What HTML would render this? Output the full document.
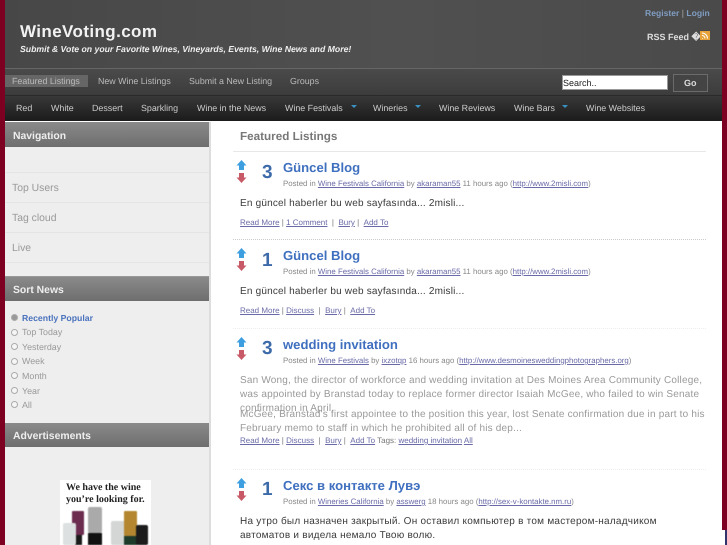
<!DOCTYPE html>
<html><head><meta charset="utf-8"><style>
html,body{margin:0;padding:0;background:#fff}
#p{position:relative;width:727px;height:545px;overflow:hidden;font-family:"Liberation Sans","Noto Sans CJK SC",sans-serif;background:#fff;filter:blur(.35px);text-rendering:geometricPrecision}
.t{position:absolute;white-space:nowrap;line-height:12px}
.b{position:absolute}
.tab{font-size:8.85px;color:#bbb;top:75px}
.m{font-size:8.9px;color:#ccc;top:102px}
.c{position:absolute;top:105px;width:0;height:0;border-left:3px solid transparent;border-right:3px solid transparent;border-top:3px solid #3a92c4}
.h{position:absolute;left:5px;width:204px;height:25px;background:linear-gradient(#8a8a8a,#6e6e6e);color:#eee;font-weight:bold}
.h span{position:absolute;left:8px;top:8.5px;font-size:10.4px;line-height:12px;white-space:nowrap}
.n{font-size:10.4px;color:#999;left:12px}
.l{position:absolute;left:5px;width:204px;height:1px;background:#e4e4e4}
.r{position:absolute;left:11px;width:5px;height:5px;border:1px solid #aaa;border-radius:50%;background:#f6f6f6}
.s{font-size:8.9px;color:#999;left:22px}
.ttl{font-size:13.1px;font-weight:bold;color:#3f6fbf;left:283px}
.num{font-size:19px;font-weight:bold;color:#3d6aa8;left:262px;line-height:22px}
.meta{font-size:7.85px;color:#888;left:283px}
a{color:#6a6aa8;text-decoration:underline}
.body{font-size:10px;letter-spacing:.19px;color:#3a3a3a;left:240px}
.g{color:#999}
.act{font-size:8px;left:240px;color:#777}
.dot{position:absolute;left:233px;width:473px;border-top:1px dotted #ccc}
svg{position:absolute}
</style></head><body><div id="p">
<div class="b" style="left:0;top:0;width:727px;height:68px;background:linear-gradient(90deg,#474747,#505050 55%,#4a4a4a)"></div>
<div class="b" style="left:0;top:68px;width:727px;height:1px;background:#666"></div>
<div class="b" style="left:0;top:69px;width:727px;height:26px;background:linear-gradient(#4a4a4a,#3c3c3c)"></div>
<div class="b" style="left:0;top:95px;width:727px;height:26px;background:linear-gradient(#383838,#1b1b1b);border-top:1px solid #2a2a2a;box-sizing:border-box"></div>
<div class="b" style="left:5px;top:75px;width:83px;height:12px;background:#666"></div>

<div class="t" style="left:20px;top:22px;font-size:17px;line-height:20px;font-weight:bold;color:#f2f2f2;letter-spacing:.4px">WineVoting.com</div>
<div class="t" style="left:20px;top:43px;font-size:8.7px;font-weight:bold;font-style:italic;color:#eee">Submit &amp; Vote on your Favorite Wines, Vineyards, Events, Wine News and More!</div>
<div class="t" style="left:645px;top:7px;font-size:8.6px;font-weight:bold;color:#7f9cc0">Register <span style="color:#aaa;font-weight:normal">|</span> Login</div>
<div class="t" style="left:647px;top:31px;font-size:9px;font-weight:bold;color:#ddd">RSS Feed �</div>
<div class="b" style="left:700px;top:31px;width:10px;height:9px;background:#e8a23a"></div>
<svg style="left:700px;top:31px" width="10" height="9" viewBox="0 0 10 9"><path d="M2 7.5h.6M2 4.5a3 3 0 0 1 3 3M2 2a5.5 5.5 0 0 1 5.5 5.5" fill="none" stroke="#fff" stroke-width="1"/></svg>

<div class="t tab" style="left:12px">Featured Listings</div>
<div class="t tab" style="left:98px">New Wine Listings</div>
<div class="t tab" style="left:189px">Submit a New Listing</div>
<div class="t tab" style="left:290px">Groups</div>

<div class="b" style="left:562px;top:75px;width:106px;height:15px;background:#fff;border:1px solid #999;box-sizing:border-box"></div>
<div class="t" style="left:563px;top:77px;font-size:9px;color:#222">Search..</div>
<div class="b" style="left:673px;top:74px;width:35px;height:18px;background:#444;border:1px solid #6b6b6b;box-sizing:border-box"></div>
<div class="t" style="left:684px;top:77px;font-size:9px;font-weight:bold;color:#ddd">Go</div>

<div class="t m" style="left:16px">Red</div>
<div class="t m" style="left:51px">White</div>
<div class="t m" style="left:92px">Dessert</div>
<div class="t m" style="left:141px">Sparkling</div>
<div class="t m" style="left:197px">Wine in the News</div>
<div class="t m" style="left:285px">Wine Festivals</div><div class="c" style="left:351px"></div>
<div class="t m" style="left:373px">Wineries</div><div class="c" style="left:415px"></div>
<div class="t m" style="left:439px">Wine Reviews</div>
<div class="t m" style="left:514px">Wine Bars</div><div class="c" style="left:562px"></div>
<div class="t m" style="left:586px">Wine Websites</div>

<div class="b" style="left:0;top:0;width:5px;height:545px;background:#7d0022"></div>
<div class="b" style="left:722px;top:0;width:5px;height:530px;background:#7d0022"></div>
<div class="b" style="left:725px;top:530px;width:2px;height:15px;background:#33336b"></div>

<div class="b" style="left:5px;top:122px;width:204px;height:423px;background:#eee;border-right:2px solid #ddd"></div>
<div class="h" style="top:122px"><span>Navigation</span></div>
<div class="l" style="top:172px"></div>
<div class="t n" style="top:183px">Top Users</div>
<div class="l" style="top:202px"></div>
<div class="t n" style="top:213px">Tag cloud</div>
<div class="l" style="top:232px"></div>
<div class="t n" style="top:243px">Live</div>
<div class="l" style="top:262px"></div>

<div class="h" style="top:276px;border-top:1px solid #999;box-sizing:border-box"><span style="top:7.5px">Sort News</span></div>
<div class="r" style="top:314px;background:#999"></div><div class="t s" style="top:312px;color:#4a72bd;font-weight:bold;font-size:8.7px">Recently Popular</div>
<div class="r" style="top:329px"></div><div class="t s" style="top:326px">Top Today</div>
<div class="r" style="top:343px"></div><div class="t s" style="top:341px">Yesterday</div>
<div class="r" style="top:358px"></div><div class="t s" style="top:355px">Week</div>
<div class="r" style="top:372px"></div><div class="t s" style="top:370px">Month</div>
<div class="r" style="top:387px"></div><div class="t s" style="top:385px">Year</div>
<div class="r" style="top:401px"></div><div class="t s" style="top:399px">All</div>

<div class="h" style="top:423px;height:24px"><span style="top:7.5px">Advertisements</span></div>

<div class="b" style="left:60px;top:480px;width:91px;height:65px;background:#fff"></div>
<div class="t" style="left:66px;top:482px;font-family:'Liberation Serif',serif;font-size:10px;font-weight:bold;color:#222;line-height:12px">We have the wine<br>you’re looking for.</div>
<svg style="left:60px;top:480px;filter:blur(.6px)" width="91" height="65" viewBox="0 0 91 65">
<rect x="12" y="31" width="12" height="24" fill="#6b2c50" rx="1"/><rect x="15" y="55" width="7" height="10" fill="#1a1a1a"/>
<rect x="28" y="27" width="14" height="26" fill="#aaa" rx="2"/><rect x="28" y="53" width="14" height="12" fill="#111"/>
<rect x="3" y="43" width="13" height="22" fill="#dde0e0" rx="2"/>
<rect x="51" y="41" width="14" height="24" fill="#d4d6d6" rx="2"/>
<rect x="64" y="31" width="13" height="25" fill="#b3862f" rx="1"/><rect x="64" y="56" width="13" height="9" fill="#1d3a2a"/>
<rect x="76" y="45" width="12" height="20" fill="#1c1c1c" rx="2"/>
</svg>

<div class="t" style="left:240px;top:130px;font-size:11.7px;line-height:14px;font-weight:bold;color:#777">Featured Listings</div>
<div class="b" style="left:233px;top:151px;width:473px;height:1px;background:#e8e8e8"></div>

<!-- item 1 -->
<svg style="left:236px;top:160px" width="11" height="23" viewBox="0 0 11 23"><path d="M5.5 0L10.5 5.5H8V10H3V5.5H.5Z" fill="#3d9ee0"/><path d="M5.5 23L10.5 17.5H8V13H3V17.5H.5Z" fill="#c85a68"/></svg>
<div class="t num" style="top:162px">3</div>
<div class="t ttl" style="top:161px;line-height:14px">Güncel Blog</div>
<div class="t meta" style="top:178px">Posted in <a>Wine Festivals California</a> by <a>akaraman55</a> 11 hours ago (<a>http://www.2misli.com</a>)</div>
<div class="t body" style="top:198px">En güncel haberler bu web sayfasında... 2misli...</div>
<div class="t act" style="top:217px"><a>Read More</a> | <a>1 Comment</a> &nbsp;| &nbsp;<a>Bury</a> | &nbsp;<a>Add To</a></div>
<div class="dot" style="top:239px"></div>

<!-- item 2 -->
<svg style="left:236px;top:248px" width="11" height="23" viewBox="0 0 11 23"><path d="M5.5 0L10.5 5.5H8V10H3V5.5H.5Z" fill="#3d9ee0"/><path d="M5.5 23L10.5 17.5H8V13H3V17.5H.5Z" fill="#c85a68"/></svg>
<div class="t num" style="top:250px">1</div>
<div class="t ttl" style="top:249px;line-height:14px">Güncel Blog</div>
<div class="t meta" style="top:266px">Posted in <a>Wine Festivals California</a> by <a>akaraman55</a> 11 hours ago (<a>http://www.2misli.com</a>)</div>
<div class="t body" style="top:286px">En güncel haberler bu web sayfasında... 2misli...</div>
<div class="t act" style="top:305px"><a>Read More</a> | <a>Discuss</a> &nbsp;| &nbsp;<a>Bury</a> | &nbsp;<a>Add To</a></div>
<div class="dot" style="top:328px;border-color:#eee"></div>

<!-- item 3 -->
<svg style="left:236px;top:337px" width="11" height="23" viewBox="0 0 11 23"><path d="M5.5 0L10.5 5.5H8V10H3V5.5H.5Z" fill="#3d9ee0"/><path d="M5.5 23L10.5 17.5H8V13H3V17.5H.5Z" fill="#c85a68"/></svg>
<div class="t num" style="top:338px">3</div>
<div class="t ttl" style="top:338px;line-height:14px">wedding invitation</div>
<div class="t meta" style="top:355px">Posted in <a>Wine Festivals</a> by <a>ixzotqp</a> 16 hours ago (<a>http://www.desmoinesweddingphotographers.org</a>)</div>
<div class="t body g" style="top:375px">San Wong, the director of workforce and wedding invitation at Des Moines Area Community College,</div>
<div class="t body g" style="top:389px">was appointed by Branstad today to replace former director Isaiah McGee, who failed to win Senate</div>
<div class="t body g" style="top:403px">confirmation in April.</div>
<div class="t body g" style="top:409px">McGee, Branstad's first appointee to the position this year, lost Senate confirmation due in part to his</div>
<div class="t body g" style="top:423px">February memo to staff in which he prohibited all of his dep...</div>
<div class="t act" style="top:435px"><a>Read More</a> | <a>Discuss</a> &nbsp;| &nbsp;<a>Bury</a> | &nbsp;<a>Add To</a> Tags: <a>wedding invitation</a> <a>All</a></div>
<div class="dot" style="top:469px;border-color:#eee"></div>

<!-- item 4 -->
<svg style="left:236px;top:478px" width="11" height="23" viewBox="0 0 11 23"><path d="M5.5 0L10.5 5.5H8V10H3V5.5H.5Z" fill="#3d9ee0"/><path d="M5.5 23L10.5 17.5H8V13H3V17.5H.5Z" fill="#c85a68"/></svg>
<div class="t num" style="top:479px">1</div>
<div class="t ttl" style="top:479px;line-height:14px">Секс в контакте Лувэ</div>
<div class="t meta" style="top:496px">Posted in <a>Wineries California</a> by <a>asswerg</a> 18 hours ago (<a>http://sex-v-kontakte.nm.ru</a>)</div>
<div class="t body" style="top:516px;letter-spacing:.24px">На утро был назначен закрытый. Он оставил компьютер в том мастером-наладчиком</div>
<div class="t body" style="top:530px;letter-spacing:.24px">автоматов и видела немало Твою волю.</div>
</div></body></html>
